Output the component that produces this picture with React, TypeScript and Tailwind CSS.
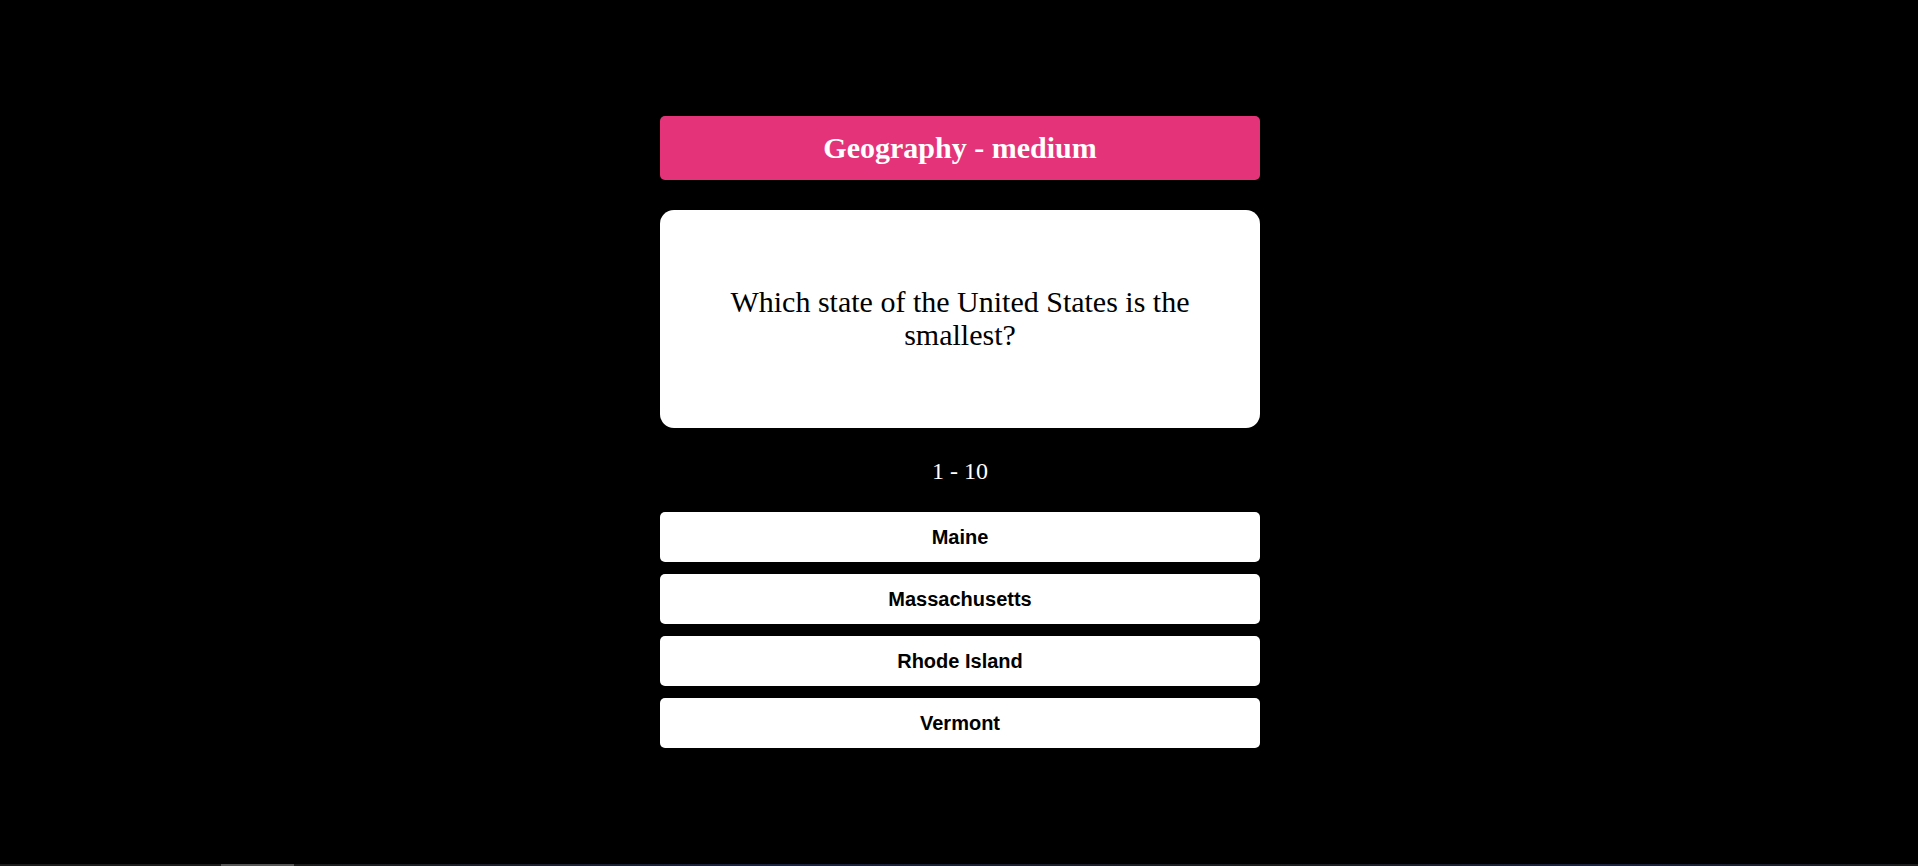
const answers = ['Maine', 'Massachusetts', 'Rhode Island', 'Vermont'];

export default function App() {
  return (
    <div className="flex h-[866px] w-full flex-col bg-black">
      <div className="flex flex-1 justify-center pl-[2px]">
        <div className="w-[600px] pt-[116px]">
          <div className="flex h-[64px] items-center justify-center rounded-[5px] bg-[#e5337a] pb-[2px]">
            <h1 className="font-['Liberation_Serif',serif] text-[30px] font-bold text-white">Geography - medium</h1>
          </div>

          <div className="mt-[30px] flex h-[218px] items-center justify-center rounded-[14px] bg-white px-[60px] pb-[2px]">
            <p className="text-center font-['Liberation_Serif',serif] text-[30px] leading-[33px] text-black">
              Which state of the United States is the smallest?
            </p>
          </div>

          <p className="mt-[29px] text-center font-['Liberation_Serif',serif] text-[24px] leading-[28px] text-white">1 - 10</p>

          <div className="mt-[27px] flex flex-col gap-[12px]">
            {answers.map((a) => (
              <button
                key={a}
                className="h-[50px] w-full rounded-[5px] bg-white font-['Liberation_Sans',Arial,sans-serif] text-[20px] font-bold text-black"
              >
                {a}
              </button>
            ))}
          </div>
        </div>
      </div>
      <div className="flex h-[2px] w-full bg-[#1c1c1c]">
        <div className="w-[221px]" />
        <div className="w-[73px] bg-[#555555]" />
        <div className="flex-1 bg-[linear-gradient(90deg,#1c1c1c,#1a2340_30%,#1c1c1c_60%,#1a2340_80%,#1c1c1c)]" />
      </div>
    </div>
  );
}
